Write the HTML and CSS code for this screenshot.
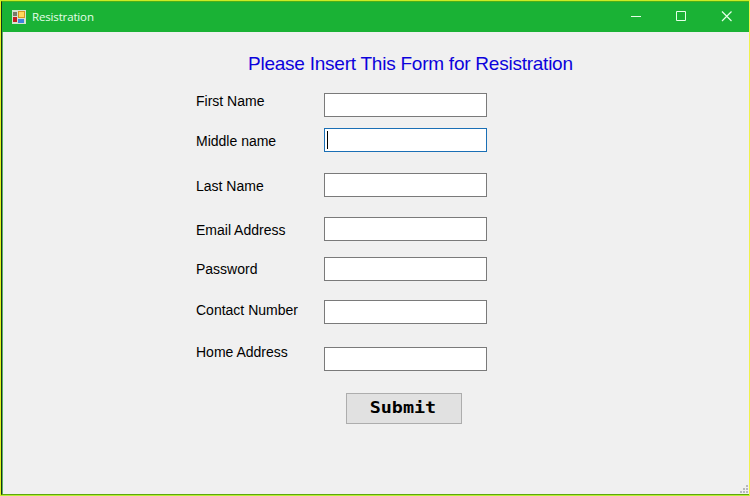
FILE: index.html
```
<!DOCTYPE html>
<html lang="en">
<head>
<meta charset="utf-8">
<title>Resistration</title>
<link rel="stylesheet" href="styles.css">
</head>
<body>
<div class="window">
  <header class="titlebar">
    <svg class="app-icon" width="14" height="14" viewBox="0 0 14 14">
      <rect width="14" height="14" fill="#d5e4cf"/>
      <rect x="1" y="2" width="4" height="4" fill="#777c68"/>
      <rect x="6" y="1" width="7" height="7" fill="#d69521"/>
      <rect x="7" y="2" width="5" height="5" fill="#ffd85b"/>
      <rect x="1" y="7" width="4" height="5" fill="#c51f22"/>
      <rect x="6" y="9" width="6" height="4" fill="#3f82dd"/>
    </svg>
    <span class="title">Resistration</span>
    <svg class="controls" width="104" height="12" viewBox="0 0 104 12" fill="none" stroke="#e5ffe8">
      <path d="M1 5.500h10M46.500 .5h9v9h-9z"/>
      <path stroke-width="1.200" d="M92 .5l9.500 9.500M101.500 .5L92 10"/>
    </svg>
  </header>
  <main class="client">
    <h1 class="heading">Please Insert This Form for Resistration</h1>
    <form class="form">
      <div class="labels">
        <label class="label first-name" for="first">First Name</label>
        <label class="label middle-name" for="middle">Middle name</label>
        <label class="label last-name" for="last">Last Name</label>
        <label class="label email" for="email">Email Address</label>
        <label class="label password" for="password">Password</label>
        <label class="label contact" for="contact">Contact Number</label>
        <label class="label home" for="home">Home Address</label>
      </div>
      <div class="fields">
        <input class="field" id="first">
        <div class="field-wrap"><input class="field active" id="middle"><span class="caret"></span></div>
        <input class="field last-field" id="last">
        <input class="field email-field" id="email">
        <input class="field password-field" id="password" type="password">
        <input class="field contact-field" id="contact">
        <input class="field home-field" id="home">
        <button class="submit" type="button"><span class="submit-text">Submit</span></button>
      </div>
    </form>
    <svg class="grip" width="8" height="8" viewBox="0 0 8 8" fill="#b5b8bd">
      <path d="M6 0h2v2H6zM3 3h2v2H3zM6 3h2v2H6zM0 6h2v2H0zM3 6h2v2H3zM6 6h2v2H6z"/>
    </svg>
  </main>
</div>
</body>
</html>
```
FILE: styles.css
```
* { box-sizing: border-box; }
body { margin: 0; overflow: hidden; }
.window {
  width: 750px;
  height: 496px;
  display: flex;
  flex-direction: column;
  background: #f0f0f0;
  border-top: 1px solid #c9ec25;
  border-right: 1px solid #f0f24c;
  border-bottom: 1px solid #b9ee35;
  border-left: 1px solid #e2f51f;
  font-family: "Liberation Sans", Arial, sans-serif;
}
.titlebar {
  height: 31px;
  flex: none;
  display: flex;
  align-items: center;
  padding: 0 15px 0 11px;
  background: #1ab235;
  border-left: 1px solid #16351b;
  border-top: 1px solid #4fae17;
}
.app-icon { margin-left: -1px; }
.title {
  margin-left: 6px;
  font: 11.5px/16px "Open Sans", sans-serif;
  letter-spacing: -0.15px;
  color: #e5ffe8;
}
.controls { margin-left: auto; }
.client {
  position: relative;
  flex: 1;
  border-left: 1px solid #16351b;
  border-bottom: 1px solid #5ca80d;
  box-shadow: inset 1px 0 #5bb55f;
}
.heading {
  margin: 20px 0 0 246px;
  font-size: 19px;
  font-weight: 400;
  line-height: 24px;
  letter-spacing: -0.24px;
  white-space: nowrap;
  color: #0c02dc;
}
.form { display: flex; margin: 17px 0 0 194px; }
.labels { width: 128px; display: flex; flex-direction: column; }
.label {
  font-size: 14px;
  line-height: 16px;
  white-space: nowrap;
  color: #000;
}
.middle-name { margin-top: 24px; }
.last-name { margin-top: 29px; }
.email { margin-top: 28px; }
.password { margin-top: 23px; }
.contact { margin-top: 25px; }
.home { margin-top: 26px; }
.fields { width: 163px; display: flex; flex-direction: column; }
.field {
  display: block;
  width: 163px;
  height: 24px;
  padding: 2px 4px;
  background: #fff;
  border: 1px solid #7a7a7a;
  border-radius: 0;
  outline: none;
}
.field-wrap { position: relative; margin-top: 11px; }
.active { border-color: #1a6fb5; }
.caret {
  position: absolute;
  left: 3px;
  top: 3px;
  width: 1px;
  height: 18px;
  background: #000;
}
.last-field { margin-top: 21px; }
.email-field { margin-top: 20px; }
.password-field { margin-top: 16px; }
.contact-field { margin-top: 19px; }
.home-field { margin-top: 23px; }
.submit {
  width: 116px;
  height: 31px;
  margin: 22px 0 0 22px;
  padding: 0;
  background: #e1e1e1;
  border: 1px solid #adadad;
  font: bold 16px/20px "DejaVu Sans Mono", monospace;
  color: #000;
}
.submit-text { display: inline-block; transform: translate(-1px, -1px) scaleX(1.15); }
.grip { position: absolute; right: 1px; bottom: 1px; }
```
